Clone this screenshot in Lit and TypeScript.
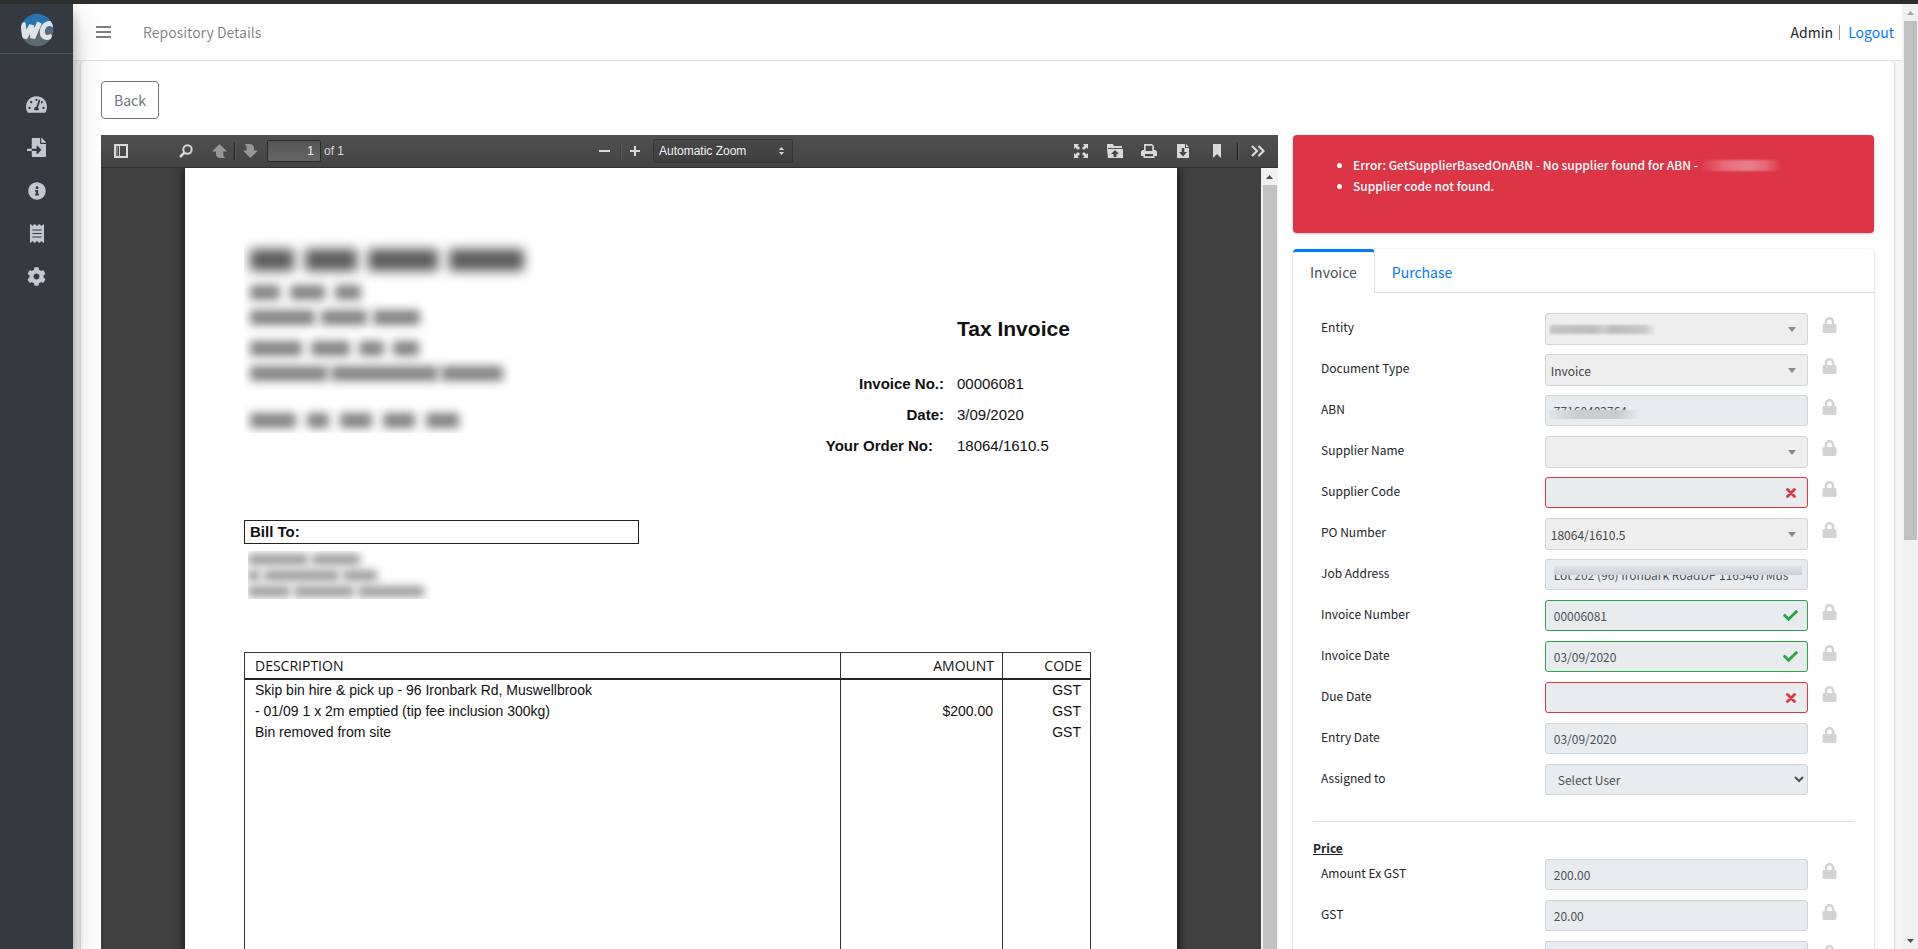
import { LitElement, html, css, nothing } from "lit";
import { customElement, property } from "lit/decorators.js";
import { classMap } from "lit/directives/class-map.js";
import { styleMap } from "lit/directives/style-map.js";

const icons = {
  dashboard: {
    box: "0 0 576 512",
    d: "M288 32C128.94 32 0 160.94 0 320c0 52.8 14.25 102.26 39.06 144.8 5.61 9.62 16.3 15.2 27.44 15.2h443c11.14 0 21.83-5.58 27.44-15.2C561.75 422.26 576 372.8 576 320c0-159.06-128.94-288-288-288zm0 64c14.71 0 26.58 10.13 30.32 23.65-1.11 2.26-2.64 4.23-3.45 6.67l-9.22 27.67c-5.13 3.49-10.97 6.01-17.64 6.01-17.67 0-32-14.33-32-32S270.33 96 288 96zM96 384c-17.67 0-32-14.33-32-32s14.33-32 32-32 32 14.33 32 32-14.33 32-32 32zm48-160c-17.67 0-32-14.33-32-32s14.33-32 32-32 32 14.33 32 32-14.33 32-32 32zm246.77-72.41l-61.33 184C343.13 347.33 352 364.54 352 384c0 11.72-3.38 22.55-8.88 32H232.88c-5.5-9.45-8.88-20.28-8.88-32 0-33.94 26.5-61.43 59.9-63.59l61.34-184.01c4.17-12.56 17.73-19.45 30.36-15.17 12.57 4.19 19.35 17.79 15.17 30.36zm14.66 57.2l15.52-46.55c3.47-1.29 7.13-2.23 11.05-2.23 17.67 0 32 14.33 32 32s-14.33 32-32 32c-11.38-.01-20.89-6.28-26.57-15.22zM480 384c-17.67 0-32-14.33-32-32s14.33-32 32-32 32 14.33 32 32-14.33 32-32 32z",
  },
  import: {
    box: "0 0 512 512",
    d: "M16 288c-8.8 0-16 7.2-16 16v32c0 8.8 7.2 16 16 16h112v-64zm489-183L407.1 7c-4.5-4.5-10.6-7-17-7H384v128h128v-6.1c0-6.3-2.5-12.4-7-16.9zm-153 31V0H152c-13.3 0-24 10.7-24 24v264h128v-65.2c0-14.3 17.3-21.4 27.4-11.3L379 308c6.6 6.7 6.6 17.4 0 24l-95.7 96.4c-10.1 10.1-27.4 3-27.4-11.3V352H128v136c0 13.3 10.7 24 24 24h336c13.3 0 24-10.7 24-24V160H376c-13.2 0-24-10.8-24-24z",
  },
  info: {
    box: "0 0 512 512",
    d: "M256 8C119.043 8 8 119.083 8 256c0 136.997 111.043 248 248 248s248-111.003 248-248C504 119.083 392.957 8 256 8zm0 110c23.196 0 42 18.804 42 42s-18.804 42-42 42-42-18.804-42-42 18.804-42 42-42zm56 254c0 6.627-5.373 12-12 12h-88c-6.627 0-12-5.373-12-12v-24c0-6.627 5.373-12 12-12h12v-64h-12c-6.627 0-12-5.373-12-12v-24c0-6.627 5.373-12 12-12h64c6.627 0 12 5.373 12 12v100h12c6.627 0 12 5.373 12 12v24z",
  },
  receipt: {
    box: "0 0 384 512",
    d: "M358.4 3.2L320 48 265.6 3.2a15.9 15.9 0 0 0-19.2 0L192 48 137.6 3.2a15.9 15.9 0 0 0-19.2 0L64 48 25.6 3.2C15-4.7 0 2.8 0 16v480c0 13.2 15 20.7 25.6 12.8L64 464l54.4 44.8a15.9 15.9 0 0 0 19.2 0L192 464l54.4 44.8a15.9 15.9 0 0 0 19.2 0L320 464l38.4 44.8c10.5 7.9 25.6.4 25.6-12.8V16c0-13.2-15-20.7-25.6-12.8zM320 360c0 4.4-3.6 8-8 8H72c-4.4 0-8-3.6-8-8v-16c0-4.4 3.6-8 8-8h240c4.4 0 8 3.6 8 8v16zm0-96c0 4.4-3.6 8-8 8H72c-4.4 0-8-3.6-8-8v-16c0-4.4 3.6-8 8-8h240c4.4 0 8 3.6 8 8v16zm0-96c0 4.4-3.6 8-8 8H72c-4.4 0-8-3.6-8-8v-16c0-4.4 3.6-8 8-8h240c4.4 0 8 3.6 8 8v16z",
  },
  cog: {
    box: "0 0 512 512",
    d: "M487.4 315.7l-42.6-24.6c4.3-23.2 4.3-47 0-70.2l42.6-24.6c4.9-2.8 7.1-8.6 5.5-14-11.1-35.6-30-67.8-54.7-94.6-3.8-4.1-10-5.1-14.8-2.3L380.8 110c-17.9-15.4-38.5-27.3-60.8-35.1V25.8c0-5.6-3.9-10.5-9.4-11.7-36.7-8.2-74.3-7.8-109.2 0-5.5 1.2-9.4 6.1-9.4 11.7V75c-22.2 7.9-42.8 19.8-60.8 35.1L88.7 85.5c-4.9-2.8-11-1.9-14.8 2.3-24.7 26.7-43.6 58.9-54.7 94.6-1.7 5.4.6 11.2 5.5 14L67.3 221c-4.3 23.2-4.3 47 0 70.2l-42.6 24.6c-4.9 2.8-7.1 8.6-5.5 14 11.1 35.6 30 67.8 54.7 94.6 3.8 4.1 10 5.1 14.8 2.3l42.6-24.6c17.9 15.4 38.5 27.3 60.8 35.1v49.2c0 5.6 3.9 10.5 9.4 11.7 36.7 8.2 74.3 7.8 109.2 0 5.5-1.2 9.4-6.1 9.4-11.7v-49.2c22.2-7.9 42.8-19.8 60.8-35.1l42.6 24.6c4.9 2.8 11 1.9 14.8-2.3 24.7-26.7 43.6-58.9 54.7-94.6 1.5-5.5-.7-11.3-5.6-14.1zM256 336c-44.1 0-80-35.9-80-80s35.9-80 80-80 80 35.9 80 80-35.9 80-80 80z",
  },
  lock: {
    box: "0 0 448 512",
    d: "M400 224h-24v-72C376 68.2 307.8 0 224 0S72 68.2 72 152v72H48c-26.5 0-48 21.5-48 48v192c0 26.5 21.5 48 48 48h352c26.5 0 48-21.5 48-48V272c0-26.5-21.5-48-48-48zm-104 0H152v-72c0-39.7 32.3-72 72-72s72 32.3 72 72v72z",
  },
  check: {
    box: "0 0 512 512",
    d: "M173.898 439.404l-166.4-166.4c-9.997-9.997-9.997-26.206 0-36.204l36.203-36.204c9.997-9.998 26.207-9.998 36.204 0L192 312.69 432.095 72.596c9.997-9.997 26.207-9.997 36.204 0l36.203 36.204c9.997 9.997 9.997 26.206 0 36.204l-294.4 294.401c-9.998 9.997-26.207 9.997-36.204-.001z",
  },
};

const icon = (name: keyof typeof icons, width: number, height: number) => html`
  <svg class="icon" width=${width} height=${height} viewBox=${icons[name].box} fill="currentColor" aria-hidden="true">
    <path d=${icons[name].d}></path>
  </svg>
`;

const base = css`
  * {
    box-sizing: border-box;
  }
  svg {
    display: block;
    flex: none;
  }
  button {
    font: inherit;
    color: inherit;
    background: none;
    border: 0;
    padding: 0;
    cursor: pointer;
  }
  a {
    color: #007bff;
    text-decoration: none;
  }
  ul {
    margin: 0;
    padding: 0;
    list-style: none;
  }
`;

/** A line of hidden words: each number is a word width, gaps sit between them. */
interface SmudgeLine {
  words: number[];
  gap: number;
  strong?: boolean;
}

const smudge = (lines: SmudgeLine[]) =>
  lines.map(
    (line) => html`
      <div class=${classMap({ smudge: true, strong: !!line.strong })} style=${styleMap({ columnGap: `${line.gap}px` })}>
        ${line.words.map((w) => html`<i style=${styleMap({ width: `${w}px` })}></i>`)}
      </div>
    `
  );

@customElement("scroll-track")
class ScrollTrack extends LitElement {
  @property({ type: Number }) share = 100;
  static styles = css`
    :host {
      display: flex;
      flex-direction: column;
      width: 16px;
      flex: none;
      background: #f1f1f1;
    }
    .end {
      height: 17px;
      flex: none;
      display: grid;
      place-items: center;
    }
    .lane {
      flex: 1;
      padding: 0 1px 0 2px;
    }
    .thumb {
      background: #c1c1c1;
    }
  `;
  render() {
    return html`
      <div class="end">
        <svg width="7" height="4"><path d="M0 4 3.500 0 7 4z" fill=${this.share > 90 ? "#505050" : "#a3a3a3"} /></svg>
      </div>
      <div class="lane"><div class="thumb" style=${styleMap({ height: `${this.share}%` })}></div></div>
      <div class="end">
        <svg width="7" height="4"><path d="M0 0 3.500 4 7 0z" fill="#505050" /></svg>
      </div>
    `;
  }
}

@customElement("side-nav")
class SideNav extends LitElement {
  static styles = [
    base,
    css`
      :host {
        display: block;
        width: 73px;
        flex: none;
        background: #343a40;
        color: #c2c7d0;
        box-shadow: 0 14px 28px rgba(0, 0, 0, 0.25), 0 10px 10px rgba(0, 0, 0, 0.22);
        z-index: 2;
      }
      .brand {
        display: grid;
        place-items: center;
        height: 50px;
        padding-top: 3px;
        border-bottom: 1px solid #4b545c;
      }
      ul {
        padding-top: 29px;
      }
      li a {
        display: grid;
        place-items: center;
        height: 43px;
        color: inherit;
      }
    `,
  ];
  render() {
    return html`
      <a class="brand" href="#home" aria-label="Home">
        <svg width="34" height="34" viewBox="0 0 34 34">
          <defs>
            <clipPath id="disc"><circle cx="17" cy="17" r="16.300"></circle></clipPath>
          </defs>
          <g clip-path="url(#disc)">
            <rect width="34" height="17" fill="#2773b0"></rect>
            <rect y="16" width="34" height="18" fill="#5b6a73"></rect>
            <g fill="none" stroke="#e0e3e5" stroke-width="5" stroke-linejoin="bevel">
              <path d="M3 9.500 4.800 25 11.500 12.500 12.800 25 19.500 9.500"></path>
              <path d="M34 12.500C29 8 22.500 12 22.300 19c0 5.500 5 7 9.700 3.800"></path>
            </g>
          </g>
        </svg>
      </a>
      <nav>
        <ul>
          <li><a href="#dashboard" aria-label="Dashboard">${icon("dashboard", 21, 19)}</a></li>
          <li><a href="#import" aria-label="Import">${icon("import", 19, 19)}</a></li>
          <li><a href="#info" aria-label="Information">${icon("info", 18, 18)}</a></li>
          <li><a href="#receipts" aria-label="Receipts">${icon("receipt", 14, 19)}</a></li>
          <li><a href="#settings" aria-label="Settings">${icon("cog", 19, 19)}</a></li>
        </ul>
      </nav>
    `;
  }
}

@customElement("pdf-viewer")
class PdfViewer extends LitElement {
  static styles = [
    base,
    css`
      :host {
        display: flex;
        flex-direction: column;
        font-family: "Liberation Sans", Arial, sans-serif;
        background: #404040;
        min-width: 0;
      }
      .toolbar {
        display: grid;
        grid-template-columns: 1fr auto 1fr;
        align-items: center;
        height: 33px;
        padding: 0 6px 0 12px;
        background: linear-gradient(#505050, #434343);
        border-bottom: 1px solid #303030;
        color: #d9d9d9;
        font-size: 12px;
      }
      .group {
        display: flex;
        align-items: center;
      }
      .tool {
        display: grid;
        place-items: center;
        width: 16px;
        height: 24px;
      }
      .tool.off {
        color: #979797;
      }
      .split {
        width: 1px;
        height: 17px;
        background: #1e1e1e;
        box-shadow: 1px 0 0 #5c5c5c;
      }
      .split.faint {
        background: #3a3a3a;
      }
      .left .find {
        margin: 0 17px 0 49px;
      }
      .left .split {
        margin: 0 7px;
      }
      .pageno {
        width: 54px;
        height: 22px;
        margin: 0 3px 0 9px;
        padding: 0 6px;
        text-align: right;
        font: 12px/18px "Liberation Sans", Arial, sans-serif;
        color: #f2f2f2;
        background: linear-gradient(#555, #666);
        border: 1px solid #2a2a2a;
        border-radius: 2px;
      }
      .centre {
        padding-left: 4px;
      }
      .centre .split {
        margin: 0 6px 0 8px;
      }
      .scale {
        display: grid;
        align-items: center;
        margin-left: 10px;
      }
      .scale > * {
        grid-area: 1 / 1;
      }
      .scale svg {
        justify-self: end;
        margin-right: 9px;
        pointer-events: none;
      }
      select {
        appearance: none;
        width: 140px;
        height: 24px;
        padding: 0 5px;
        font: 12px/20px "Liberation Sans", Arial, sans-serif;
        color: #f2f2f2;
        background: linear-gradient(#484848, #3e3e3e);
        border: 1px solid #343434;
        border-radius: 2px;
      }
      .right {
        justify-content: flex-end;
        gap: 6px;
      }
      .right .tool {
        width: 28px;
      }
      .stage {
        display: flex;
        flex: 1;
        min-height: 0;
      }
      scroll-track {
        width: 17px;
      }
      .canvas {
        flex: 1;
        min-width: 0;
        overflow: hidden;
      }
      .page {
        max-width: 992px;
        height: 100%;
        margin: 0 auto;
        padding: 0 86px 0 59px;
        display: flex;
        flex-direction: column;
        background: #fff;
        box-shadow: 0 0 9px 1px rgba(0, 0, 0, 0.75);
        color: #111;
        font-size: 15px;
        line-height: 20px;
      }
      .head {
        display: flex;
        justify-content: space-between;
        height: 352px;
        flex: none;
      }
      .sender {
        height: 265px;
        padding: 78px 60px 0 6px;
        overflow: hidden;
      }
      .smudge {
        display: flex;
        align-items: center;
        height: 25px;
      }
      .smudge i {
        height: 15px;
        background: #828282;
        filter: blur(5px);
      }
      .smudge.strong i {
        height: 22px;
        background: #5a5a5a;
        filter: blur(6px);
      }
      .sender .smudge.strong {
        height: 28px;
        margin-bottom: 6px;
      }
      .sender .smudge:nth-child(3) {
        margin-bottom: 6px;
      }
      .sender .smudge:nth-child(5) {
        margin-bottom: 22px;
      }
      .meta {
        display: grid;
        grid-template-columns: auto 134px;
        grid-template-rows: 51px;
        grid-auto-rows: 31px;
        align-content: start;
        align-items: center;
        column-gap: 13px;
        margin: 0;
        padding-top: 149px;
      }
      .meta h1 {
        grid-column: 2;
        align-self: start;
        margin: 0;
        font-size: 21px;
        line-height: 24px;
        white-space: nowrap;
      }
      .meta dt {
        text-align: right;
        font-weight: bold;
      }
      .meta dd {
        margin: 0;
      }
      .meta .indent {
        padding-right: 11px;
      }
      .bill {
        width: 395px;
        height: 24px;
        flex: none;
        padding-left: 5px;
        margin: 0;
        border: 1px solid #222;
        font-size: 15px;
        line-height: 22px;
      }
      .payer {
        height: 56px;
        padding: 7px 0 0 4px;
        flex: none;
      }
      .clip {
        overflow: hidden;
        height: 48px;
      }
      .payer .smudge {
        height: 16px;
      }
      .payer .smudge i {
        height: 11px;
        background: #9a9a9a;
        filter: blur(4px);
      }
      table {
        flex: 1;
        margin-top: 52px;
        display: grid;
        grid-template-columns: 1fr 162px 88px;
        grid-template-rows: 27px repeat(3, 21px) 1fr;
        border: 1px solid #333;
        border-bottom: 0;
        font-size: 14px;
        line-height: 21px;
      }
      thead,
      tbody,
      tr {
        display: contents;
      }
      th {
        padding: 2px 8px 0 10px;
        font: 14px/22px "Open Sans", "Noto Sans", sans-serif;
        text-align: left;
        border-bottom: 2px solid #222;
      }
      td {
        padding: 0 9px 0 10px;
      }
      th + th,
      td + td {
        text-align: right;
        border-left: 1px solid #333;
      }
    `,
  ];

  render() {
    return html`
      <div class="toolbar" role="toolbar" aria-label="Document">
        <div class="group left">
          <button class="tool" aria-label="Toggle sidebar">
            <svg width="14" height="14" fill="currentColor">
              <path fill-rule="evenodd" d="M0 0h14v14H0zM2 2v10h3V2zM6 2v10h6V2z"></path>
              <path d="M2 2h2v10H2z" opacity=".35"></path>
            </svg>
          </button>
          <button class="tool find" aria-label="Find">
            <svg width="14" height="14" fill="none" stroke="currentColor" stroke-width="2">
              <circle cx="8.500" cy="5.500" r="4.200"></circle>
              <path d="M5.600 8.400 1 13" stroke-width="2.600"></path>
            </svg>
          </button>
          <button class="tool off" aria-label="Previous page">
            <svg width="15" height="14" fill="currentColor">
              <path d="M7.500 0 15 7.500h-3.700V10c0 1.500.7 3 2 4H8.500C5.500 14 4 12 4 10V7.500H0z"></path>
            </svg>
          </button>
          <span class="split"></span>
          <button class="tool off" aria-label="Next page">
            <svg width="15" height="14" fill="currentColor">
              <path d="M7.500 14 0 6.500h3.700V4c0-1.500-.7-3-2-4h4.800C9.500 0 11 2 11 4v2.500h4z"></path>
            </svg>
          </button>
          <input class="pageno" id="pageno" value="1" aria-label="Page" />
          <label for="pageno">of 1</label>
        </div>
        <div class="group centre">
          <button class="tool" aria-label="Zoom out">
            <svg width="12" height="12"><path d="M1 5h11v2H1z" fill="currentColor"></path></svg>
          </button>
          <span class="split faint"></span>
          <button class="tool" aria-label="Zoom in">
            <svg width="12" height="12"><path d="M1 5h4V1h2v4h4v2H7v4H5V7H1z" fill="currentColor"></path></svg>
          </button>
          <div class="scale">
            <select aria-label="Zoom">
              <option>Automatic Zoom</option>
            </select>
            <svg width="5" height="8" fill="#d9d9d9"><path d="M0 3 2.500 0 5 3zM0 5h5L2.500 8z"></path></svg>
          </div>
        </div>
        <div class="group right">
          <button class="tool" aria-label="Presentation mode">
            <svg width="14" height="14" fill="currentColor">
              <path
                d="M0 0h5L3.600 1.400 6 4 4 6 1.400 3.600 0 5zM14 0v5l-1.400-1.400L10 6 8 4l2.400-2.600L9 0zM0 14V9l1.400 1.400L4 8l2 2-2.400 2.600L5 14zM14 14H9l1.400-1.400L8 10l2-2 2.600 2.400L14 9z"
              ></path>
            </svg>
          </button>
          <button class="tool" aria-label="Open file">
            <svg width="16" height="14" fill="currentColor">
              <path fill-rule="evenodd" d="M0 0h6l1 2h8v2H1v1h15v9H1L0 5zM8 6 4 10h2.500v3h3v-3H12z"></path>
            </svg>
          </button>
          <button class="tool" aria-label="Print">
            <svg width="16" height="14" fill="currentColor">
              <path fill-rule="evenodd" d="M3 0h8l2 2v4h1.500L16 7.500V12h-2.500v2h-11v-2H0V7.500L1.500 6H3zM4.700 1.700V7h6.600V1.700zM4 10v2.300h8V10z"></path>
            </svg>
          </button>
          <button class="tool" aria-label="Download">
            <svg width="12" height="14" fill="currentColor">
              <path fill-rule="evenodd" d="M0 0h8v4h4v10H0zM4.700 4v4H2l4 4.500L10 8H7.300V4z"></path>
              <path d="M9 0l3 3H9z"></path>
            </svg>
          </button>
          <button class="tool" aria-label="Bookmark">
            <svg width="8" height="14" fill="currentColor"><path d="M0 0h8v14l-4-4-4 4z"></path></svg>
          </button>
          <span class="split"></span>
          <button class="tool" aria-label="Tools">
            <svg width="14" height="12" fill="none" stroke="currentColor" stroke-width="2.200">
              <path d="M1 1l5 5-5 5M7.500 1l5 5-5 5"></path>
            </svg>
          </button>
        </div>
      </div>
      <div class="stage">
        <div class="canvas">
          <article class="page">
            <div class="head">
              <div class="sender" aria-hidden="true">
                ${smudge([
                  { words: [44, 52, 70, 75], gap: 11, strong: true },
                  { words: [30, 35, 26], gap: 10 },
                  { words: [65, 46, 47], gap: 6 },
                  { words: [52, 39, 25, 26], gap: 9 },
                  { words: [78, 107, 62], gap: 3 },
                ])}
                ${smudge([{ words: [46, 22, 32, 32, 33], gap: 11 }])}
              </div>
              <dl class="meta">
                <h1>Tax Invoice</h1>
                <dt>Invoice No.:</dt>
                <dd>00006081</dd>
                <dt>Date:</dt>
                <dd>3/09/2020</dd>
                <dt class="indent">Your Order No:</dt>
                <dd>18064/1610.5</dd>
              </dl>
            </div>
            <h2 class="bill">Bill To:</h2>
            <div class="payer" aria-hidden="true">
              <div class="clip">
                ${smudge([
                  { words: [60, 48], gap: 4 },
                  { words: [12, 75, 34], gap: 4 },
                  { words: [42, 60, 66], gap: 4 },
                ])}
              </div>
            </div>
            <table>
              <thead>
                <tr>
                  <th>DESCRIPTION</th>
                  <th>AMOUNT</th>
                  <th>CODE</th>
                </tr>
              </thead>
              <tbody>
                <tr>
                  <td>Skip bin hire &amp; pick up - 96 Ironbark Rd, Muswellbrook</td>
                  <td></td>
                  <td>GST</td>
                </tr>
                <tr>
                  <td>- 01/09 1 x 2m emptied (tip fee inclusion 300kg)</td>
                  <td>$200.00</td>
                  <td>GST</td>
                </tr>
                <tr>
                  <td>Bin removed from site</td>
                  <td></td>
                  <td>GST</td>
                </tr>
                <tr>
                  <td></td>
                  <td></td>
                  <td></td>
                </tr>
              </tbody>
            </table>
          </article>
        </div>
        <scroll-track share="100"></scroll-track>
      </div>
    `;
  }
}

interface Field {
  id: string;
  label: string;
  kind: "combo" | "text" | "native";
  value?: string;
  state?: "ok" | "bad";
  lock?: boolean;
  veil?: "entity" | "lower" | "upper";
}

const details: Field[] = [
  { id: "entity", label: "Entity", kind: "combo", lock: true, veil: "entity" },
  { id: "doctype", label: "Document Type", kind: "combo", value: "Invoice", lock: true },
  { id: "abn", label: "ABN", kind: "text", value: "77160402764", lock: true, veil: "lower" },
  { id: "supplier", label: "Supplier Name", kind: "combo", lock: true },
  { id: "code", label: "Supplier Code", kind: "text", state: "bad", lock: true },
  { id: "po", label: "PO Number", kind: "combo", value: "18064/1610.5", lock: true },
  { id: "job", label: "Job Address", kind: "text", value: "Lot 202 (96) Ironbark RoadDP 1165467Mus", veil: "upper" },
  { id: "number", label: "Invoice Number", kind: "text", value: "00006081", state: "ok", lock: true },
  { id: "date", label: "Invoice Date", kind: "text", value: "03/09/2020", state: "ok", lock: true },
  { id: "due", label: "Due Date", kind: "text", state: "bad", lock: true },
  { id: "entry", label: "Entry Date", kind: "text", value: "03/09/2020", lock: true },
  { id: "assigned", label: "Assigned to", kind: "native", value: "Select User" },
];

const prices: Field[] = [
  { id: "exgst", label: "Amount Ex GST", kind: "text", value: "200.00", lock: true },
  { id: "gst", label: "GST", kind: "text", value: "20.00", lock: true },
  { id: "extra", label: "", kind: "text", lock: true },
];

@customElement("invoice-form")
class InvoiceForm extends LitElement {
  static styles = [
    base,
    css`
      :host {
        display: block;
        border-radius: 4px;
        background: #fff;
        box-shadow: 0 0 1px rgba(0, 0, 0, 0.125), 0 1px 3px rgba(0, 0, 0, 0.2);
      }
      .tabs {
        display: flex;
        height: 44px;
        font-size: 14px;
        line-height: 24px;
        border-bottom: 1px solid #dee2e6;
      }
      .tabs a {
        height: 43px;
        padding: 11px 17px 0;
      }
      .tabs .active {
        height: 44px;
        padding-top: 8px;
        color: #495057;
        background: #fff;
        border-top: 3px solid #007bff;
        border-right: 1px solid #dee2e6;
        border-radius: 4px 4px 0 0;
      }
      form {
        padding: 20px;
        font-size: 12px;
        line-height: 21px;
      }
      .row {
        display: grid;
        grid-template-columns: 17fr 20fr 46px;
        align-items: start;
        height: 41px;
        padding-left: 8px;
      }
      label {
        padding-top: 3px;
      }
      .field {
        display: grid;
        align-items: center;
      }
      .field > * {
        grid-area: 1 / 1;
      }
      input,
      select {
        width: 100%;
        min-width: 0;
        height: 31px;
        margin: 0;
        padding: 0 8px;
        font: inherit;
        color: #495057;
        opacity: 1;
        background: #e9ecef;
        border: 1px solid #ced4da;
        border-radius: 3px;
      }
      .combo {
        appearance: none;
        height: 32px;
        padding: 0 5px;
        background: #eee;
        color: #444;
      }
      .ok {
        border-color: #28a745;
      }
      .bad {
        border-color: #dc3545;
      }
      .mark {
        justify-self: end;
        margin-right: 10px;
        pointer-events: none;
      }
      .mark.caret,
      .mark.cross {
        margin-right: 12px;
      }
      .mark.tick {
        color: #28a745;
      }
      .veil {
        height: 9px;
        pointer-events: none;
      }
      .veil.entity {
        width: 104px;
        margin-left: 5px;
        background: linear-gradient(90deg, #c6c6c6, #bdbdbd 40%, #cecece 52%, #bdbdbd 60%, #c8c8c8 90%, #e4e4e4);
        filter: blur(1px);
      }
      .veil.lower {
        align-self: end;
        width: 90px;
        margin: 0 0 7px 5px;
        background: linear-gradient(90deg, #e1e4e7, #cacdd2 30%, #c8cbd0 75%, #e9ecef);
      }
      .veil.upper {
        align-self: start;
        margin: 7px 6px 0 9px;
        background: linear-gradient(#e0e3e6, #cdd1d6);
      }
      .lock {
        display: grid;
        padding: 4px 0 0 14px;
        color: #d3d3d3;
        justify-self: start;
      }
      hr {
        margin: 16px 0;
        border: 0;
        border-top: 1px solid #e1e1e1;
      }
      h3 {
        margin: 0;
        padding-bottom: 2px;
        font-size: 12px;
        line-height: 19px;
        font-weight: bold;
        text-decoration: underline;
      }
    `,
  ];

  private control(f: Field) {
    if (f.kind === "text") {
      return html`<input id=${f.id} class=${f.state ?? ""} .value=${f.value ?? ""} readonly />`;
    }
    return html`
      <select id=${f.id} class=${f.kind} disabled>
        <option>${f.value ?? ""}</option>
      </select>
    `;
  }

  private mark(f: Field) {
    if (f.kind === "combo") {
      return html`<svg class="mark caret" width="8" height="5"><path d="M0 0h8L4 5z" fill="#888"></path></svg>`;
    }
    if (f.state === "ok") {
      return html`<span class="mark tick">${icon("check", 15, 15)}</span>`;
    }
    if (f.state === "bad") {
      return html`
        <svg class="mark cross" width="10" height="10" stroke="#dc3545" stroke-width="2.800" stroke-linecap="round">
          <path d="M1.500 1.500l7 7M8.500 1.500l-7 7"></path>
        </svg>
      `;
    }
    return nothing;
  }

  private row(f: Field) {
    return html`
      <div class="row">
        <label for=${f.id}>${f.label}</label>
        <div class="field">
          ${this.control(f)} ${this.mark(f)} ${f.veil ? html`<span class="veil ${f.veil}"></span>` : nothing}
        </div>
        ${f.lock
          ? html`<button type="button" class="lock" aria-label="Lock ${f.label}">${icon("lock", 15, 16)}</button>`
          : nothing}
      </div>
    `;
  }

  render() {
    return html`
      <nav class="tabs">
        <a class="active" href="#invoice">Invoice</a>
        <a href="#purchase">Purchase</a>
      </nav>
      <form>
        ${details.map((f) => this.row(f))}
        <hr />
        <h3>Price</h3>
        ${prices.map((f) => this.row(f))}
      </form>
    `;
  }
}

@customElement("app-root")
class AppRoot extends LitElement {
  static styles = [
    base,
    css`
      :host {
        display: flex;
        flex-direction: column;
        height: 100vh;
        overflow: hidden;
        border-top: 4px solid #2d2d2d;
        box-sizing: border-box;
        font-family: "Noto Sans CJK SC", "Noto Sans", sans-serif;
        font-size: 14px;
        line-height: 24px;
        color: #212529;
        background: #f4f6f9;
      }
      .shell {
        display: flex;
        flex: 1;
        min-height: 0;
      }
      .main {
        display: flex;
        flex-direction: column;
        flex: 1;
        min-width: 0;
      }
      header {
        display: flex;
        align-items: center;
        height: 57px;
        flex: none;
        padding: 0 8px 0 23px;
        background: #fff;
        border-bottom: 1px solid #dee2e6;
        color: rgba(0, 0, 0, 0.5);
      }
      .title {
        margin-left: 32px;
        color: inherit;
      }
      .user {
        display: flex;
        gap: 6px;
        margin-left: auto;
        color: #212529;
      }
      .user i {
        width: 1px;
        height: 15px;
        margin: 5px 2px 0 0;
        background: #b98a73;
      }
      .scroll {
        flex: 1;
        min-height: 0;
        padding: 0 8px;
        overflow-y: auto;
        scrollbar-width: none;
      }
      .card {
        padding: 20px;
        background: #fff;
        border-radius: 4px;
        box-shadow: 0 0 1px rgba(0, 0, 0, 0.125), 0 1px 3px rgba(0, 0, 0, 0.2);
      }
      .back {
        display: block;
        height: 38px;
        padding: 0 12px;
        color: #6c757d;
        border: 1px solid #6c757d;
        border-radius: 4px;
      }
      .columns {
        display: grid;
        grid-template-columns: repeat(12, minmax(0, 1fr));
        column-gap: 15px;
        align-items: start;
        margin-top: 16px;
      }
      pdf-viewer {
        grid-column: span 8;
        height: 1000px;
      }
      .side {
        grid-column: span 4;
        display: grid;
        gap: 16px;
      }
      .alert {
        height: 98px;
        padding: 19px 20px 0 60px;
        color: #fff;
        background: #dc3545;
        border-radius: 4px;
        box-shadow: 0 0 1px rgba(0, 0, 0, 0.125), 0 1px 3px rgba(0, 0, 0, 0.2);
        font-size: 12px;
        font-weight: 500;
        line-height: 21px;
      }
      .alert ul {
        list-style: disc;
      }
      .hidden-number {
        display: inline-block;
        width: 82px;
        height: 11px;
        margin-left: 2px;
        vertical-align: -1px;
        background: linear-gradient(90deg, #dc3545, #e56e7a 30%, #e97f8a 60%, #e46a77 80%, #dc3545);
        filter: blur(1px);
      }
    `,
  ];

  render() {
    return html`
      <div class="shell">
        <side-nav></side-nav>
        <div class="main">
          <header>
            <button aria-label="Menu">
              <svg width="15" height="12" fill="currentColor">
                <path d="M0 0h15v2H0zM0 5h15v2H0zM0 10h15v2H0z"></path>
              </svg>
            </button>
            <a class="title" href="#details">Repository Details</a>
            <div class="user"><span>Admin</span><i></i><a href="#logout">Logout</a></div>
          </header>
          <div class="scroll">
            <main class="card">
              <button class="back">Back</button>
              <div class="columns">
                <pdf-viewer></pdf-viewer>
                <div class="side">
                  <div class="alert" role="alert">
                    <ul>
                      <li>Error: GetSupplierBasedOnABN - No supplier found for ABN -<span class="hidden-number"></span></li>
                      <li>Supplier code not found.</li>
                    </ul>
                  </div>
                  <invoice-form></invoice-form>
                </div>
              </div>
            </main>
          </div>
        </div>
        <scroll-track share="57"></scroll-track>
      </div>
    `;
  }
}
